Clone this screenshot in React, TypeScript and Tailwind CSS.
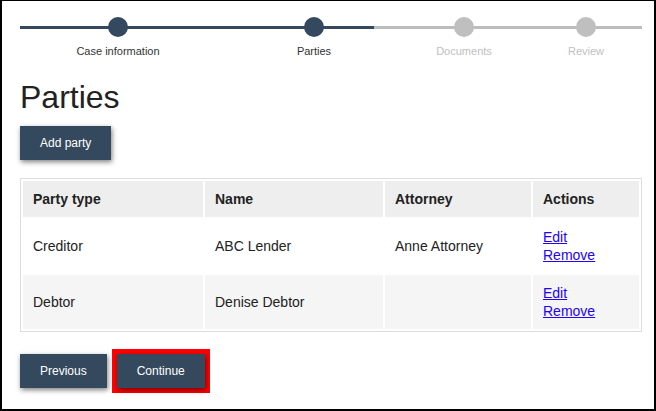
const steps = [
  { label: 'Case information', done: true, ml: 'ml-0' },
  { label: 'Parties', done: true, ml: 'ml-[96px]' },
  { label: 'Documents', done: false, ml: 'ml-[50px]' },
  { label: 'Review', done: false, ml: 'ml-[22px]' },
];

const parties = [
  { type: 'Creditor', name: 'ABC Lender', attorney: 'Anne Attorney' },
  { type: 'Debtor', name: 'Denise Debtor', attorney: '' },
];

function Stepper() {
  return (
    <div className="relative pt-[16px]">
      {/* progress track */}
      <div className="absolute left-[18px] top-[25px] flex h-[3px] w-[622px]">
        <div className="h-full w-[354px] bg-[#34495e]" />
        <div className="h-full flex-1 bg-[#bdbdbd]" />
      </div>
      <div className="relative flex pl-[66px]">
        {steps.map((s) => (
          <div key={s.label} className={`flex w-[100px] flex-col items-center ${s.ml}`}>
            <div className={`h-[20px] w-[20px] rounded-full ${s.done ? 'bg-[#34495e]' : 'bg-[#bfbfbf]'}`} />
            <span className={`mt-[8px] text-[11px] leading-[13px] ${s.done ? 'text-[#333]' : 'text-[#c0c0c0]'}`}>
              {s.label}
            </span>
          </div>
        ))}
      </div>
    </div>
  );
}

function Button({ children }: { children: React.ReactNode }) {
  return (
    <button className="h-[34px] bg-[#34495e] px-5 text-[12px] text-white shadow-[1px_2px_5px_rgba(0,0,0,0.5)]">
      {children}
    </button>
  );
}

export default function App() {
  return (
    <div
      className="h-[411px] w-[656px] overflow-hidden border-x-2 border-t border-b-2 border-black bg-white text-[#222]"
      style={{ fontFamily: '"Liberation Sans", Arial, sans-serif' }}
    >
      <Stepper />
      <div className="px-[18px]">
        <h1 className="mt-[23px] text-[32px] leading-[32px] font-normal">Parties</h1>
        <div className="mt-[13px]">
          <Button>Add party</Button>
        </div>

        <table className="mt-[18px] w-[622px] border-separate border-spacing-[2px] border border-[#ddd] text-[14px] leading-[18px]">
          <thead>
            <tr className="bg-[#eee] text-left">
              <th className="w-[180px] px-[10px] py-[9px] font-bold">Party type</th>
              <th className="w-[178px] px-[10px] py-[9px] font-bold">Name</th>
              <th className="w-[146px] px-[10px] py-[9px] font-bold">Attorney</th>
              <th className="w-[106px] px-[10px] py-[9px] font-bold">Actions</th>
            </tr>
          </thead>
          <tbody>
            {parties.map((p, i) => (
              <tr key={p.name} className={i % 2 === 1 ? 'bg-[#f5f5f5]' : 'bg-white'}>
                <td className="px-[10px] py-[9px]">{p.type}</td>
                <td className="px-[10px] py-[9px]">{p.name}</td>
                <td className="px-[10px] py-[9px]">{p.attorney}</td>
                <td className="px-[10px] py-[9px]">
                  <a href="#" className="block w-fit text-[#2200ff] underline">Edit</a>
                  <a href="#" className="block w-fit text-[#2200ff] underline">Remove</a>
                </td>
              </tr>
            ))}
          </tbody>
        </table>

        <div className="mt-[17px] flex items-center gap-[5px]">
          <Button>Previous</Button>
          <div className="border-[5px] border-[#ff0000]">
            <Button>Continue</Button>
          </div>
        </div>
      </div>
    </div>
  );
}
